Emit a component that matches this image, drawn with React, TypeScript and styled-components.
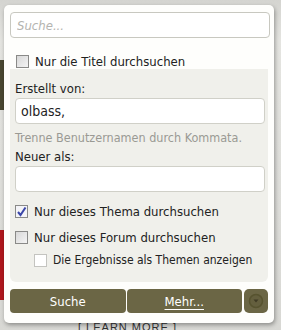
import React from 'react';
import styled, {createGlobalStyle} from "styled-components";

const Global = createGlobalStyle`
  html, body {
    margin: 0;
    padding: 0;
    background: #dcdcd8;
    font-family: "DejaVu Sans Condensed", "DejaVu Sans", Tahoma, sans-serif;
  }
`

export default function App() {
    return (
        <Page>
            <Global/>
            <Backdrop>
                <Strip>
                    <Block color={"#4a4832"} height={50} top={60}/>
                    <Block color={"#b0171d"} height={70} top={120}/>
                </Strip>
                <LearnMore>[ LEARN MORE ]</LearnMore>
            </Backdrop>

            <Popup>
                <SearchInput placeholder="Suche..."/>
                <CheckRow indent={6} top={15}>
                    <Box/>
                    <span>Nur die Titel durchsuchen</span>
                </CheckRow>

                <Panel>
                    <Label top={0}>Erstellt von:</Label>
                    <Field defaultValue="olbass,"/>
                    <Hint>Trenne Benutzernamen durch Kommata.</Hint>
                    <Label top={4}>Neuer als:</Label>
                    <Field/>
                    <CheckRow indent={0} top={11}>
                        <Box checked>
                            <svg width="11" height="11" viewBox="0 0 11 11">
                                <path d="M2 6 L4.5 9 L9.5 1.5" stroke="#3a46a8" strokeWidth="2" fill="none"/>
                            </svg>
                        </Box>
                        <span>Nur dieses Thema durchsuchen</span>
                    </CheckRow>
                    <CheckRow indent={0} top={10}>
                        <Box/>
                        <span>Nur dieses Forum durchsuchen</span>
                    </CheckRow>
                    <CheckRow indent={19} top={7} small>
                        <Box light/>
                        <span>Die Ergebnisse als Themen anzeigen</span>
                    </CheckRow>
                </Panel>

                <Buttons>
                    <Button>Suche</Button>
                    <Button underline>Mehr...</Button>
                    <Round>
                        <svg width="16" height="16" viewBox="0 0 16 16">
                            <circle cx="8" cy="8" r="6.5" fill="#645f3e" stroke="#57532f" strokeWidth="1.5"/>
                            <path d="M5.5 6.5 L10.5 6.5 L8 9.5 Z" fill="#3f3b24"/>
                        </svg>
                    </Round>
                </Buttons>
            </Popup>
        </Page>
    );
}

const Page = styled.div`
  position: relative;
  width: 281px;
  height: 330px;
  overflow: hidden;
`

const Backdrop = styled.div`
  height: 100%;
  background: linear-gradient(#d4d4d0, #e4e4e0 40px, #d8d8d4);
  display: flex;
  flex-direction: column;
  justify-content: flex-end;
`

const Strip = styled.div`
  position: absolute;
  left: 0;
  top: 0;
  width: 6px;
`

const Block = styled.div<{color: string; height: number; top: number}>`
  margin-top: ${p => p.top}px;
  height: ${p => p.height}px;
  background: ${p => p.color};
`

const LearnMore = styled.div`
  font-family: "Liberation Sans", Arial, sans-serif;
  font-size: 11px;
  line-height: 12px;
  color: #333;
  letter-spacing: 1px;
  padding-left: 78px;
  margin-bottom: -3px;
`

const Popup = styled.div`
  position: absolute;
  left: 4px;
  top: 5px;
  width: 270px;
  height: 318px;
  box-sizing: border-box;
  padding: 7px 6px 0 6px;
  background: #fefefc;
  border-radius: 5px;
  box-shadow: 1px 2px 4px rgba(0, 0, 0, 0.35);
  display: flex;
  flex-direction: column;
`

const SearchInput = styled.input`
  box-sizing: border-box;
  width: 260px;
  height: 26px;
  border: 1px solid #c8c8c0;
  border-radius: 4px;
  padding: 0 6px;
  font-family: "DejaVu Sans Condensed", "DejaVu Sans", sans-serif;
  font-size: 13px;
  outline: none;
  &::placeholder {
    color: #b4b4b0;
    font-style: italic;
  }
`

const CheckRow = styled.label<{indent: number; top: number; small?: boolean}>`
  display: flex;
  align-items: center;
  gap: ${p => p.small ? 6 : 6}px;
  margin-top: ${p => p.top}px;
  padding-left: ${p => p.indent}px;
  font-size: ${p => p.small ? 12 : 13}px;
  color: #222;
  height: 16px;
  white-space: nowrap;
`

const Box = styled.span<{checked?: boolean; light?: boolean}>`
  box-sizing: border-box;
  flex-shrink: 0;
  width: 13px;
  height: 13px;
  border: 1px solid ${p => p.light ? "#c4c4c0" : "#8a8a88"};
  background: ${p => p.light ? "#fff" : "linear-gradient(135deg, #d8d8d8, #f4f4f4)"};
  display: flex;
  align-items: center;
  justify-content: center;
  ${p => p.checked ? "background: #f4f4f8;" : ""}
`

const Panel = styled.div`
  margin-top: 0;
  background: #f0f0eb;
  border-radius: 0 0 6px 6px;
  padding: 12px 5px 14px 5px;
  display: flex;
  flex-direction: column;
  width: 258px;
  box-sizing: border-box;
`

const Label = styled.div<{top: number}>`
  font-size: 13px;
  line-height: 15px;
  color: #222;
  margin-top: ${p => p.top}px;
  margin-bottom: 2px;
`

const Field = styled.input`
  box-sizing: border-box;
  width: 250px;
  height: 26px;
  border: 1px solid #d0d0c8;
  border-radius: 4px;
  padding: 0 5px;
  font-family: "DejaVu Sans Condensed", "DejaVu Sans", sans-serif;
  font-size: 14px;
  color: #222;
  background: #fff;
  outline: none;
`

const Hint = styled.div`
  font-size: 12.5px;
  line-height: 15px;
  color: #9a9a94;
  margin-top: 6px;
`

const Buttons = styled.div`
  display: flex;
  gap: 1px;
  margin-top: 7px;
`

const Button = styled.div<{underline?: boolean}>`
  flex: 1;
  height: 24px;
  background: #6b6645;
  color: #fff;
  font-size: 13px;
  display: flex;
  align-items: center;
  justify-content: center;
  border-radius: 4px;
  text-decoration: ${p => p.underline ? "underline" : "none"};
  text-underline-offset: 3px;
`

const Round = styled.div`
  width: 24px;
  height: 24px;
  margin-left: 1px;
  background: #6b6645;
  border-radius: 5px;
  display: flex;
  align-items: center;
  justify-content: center;
`
